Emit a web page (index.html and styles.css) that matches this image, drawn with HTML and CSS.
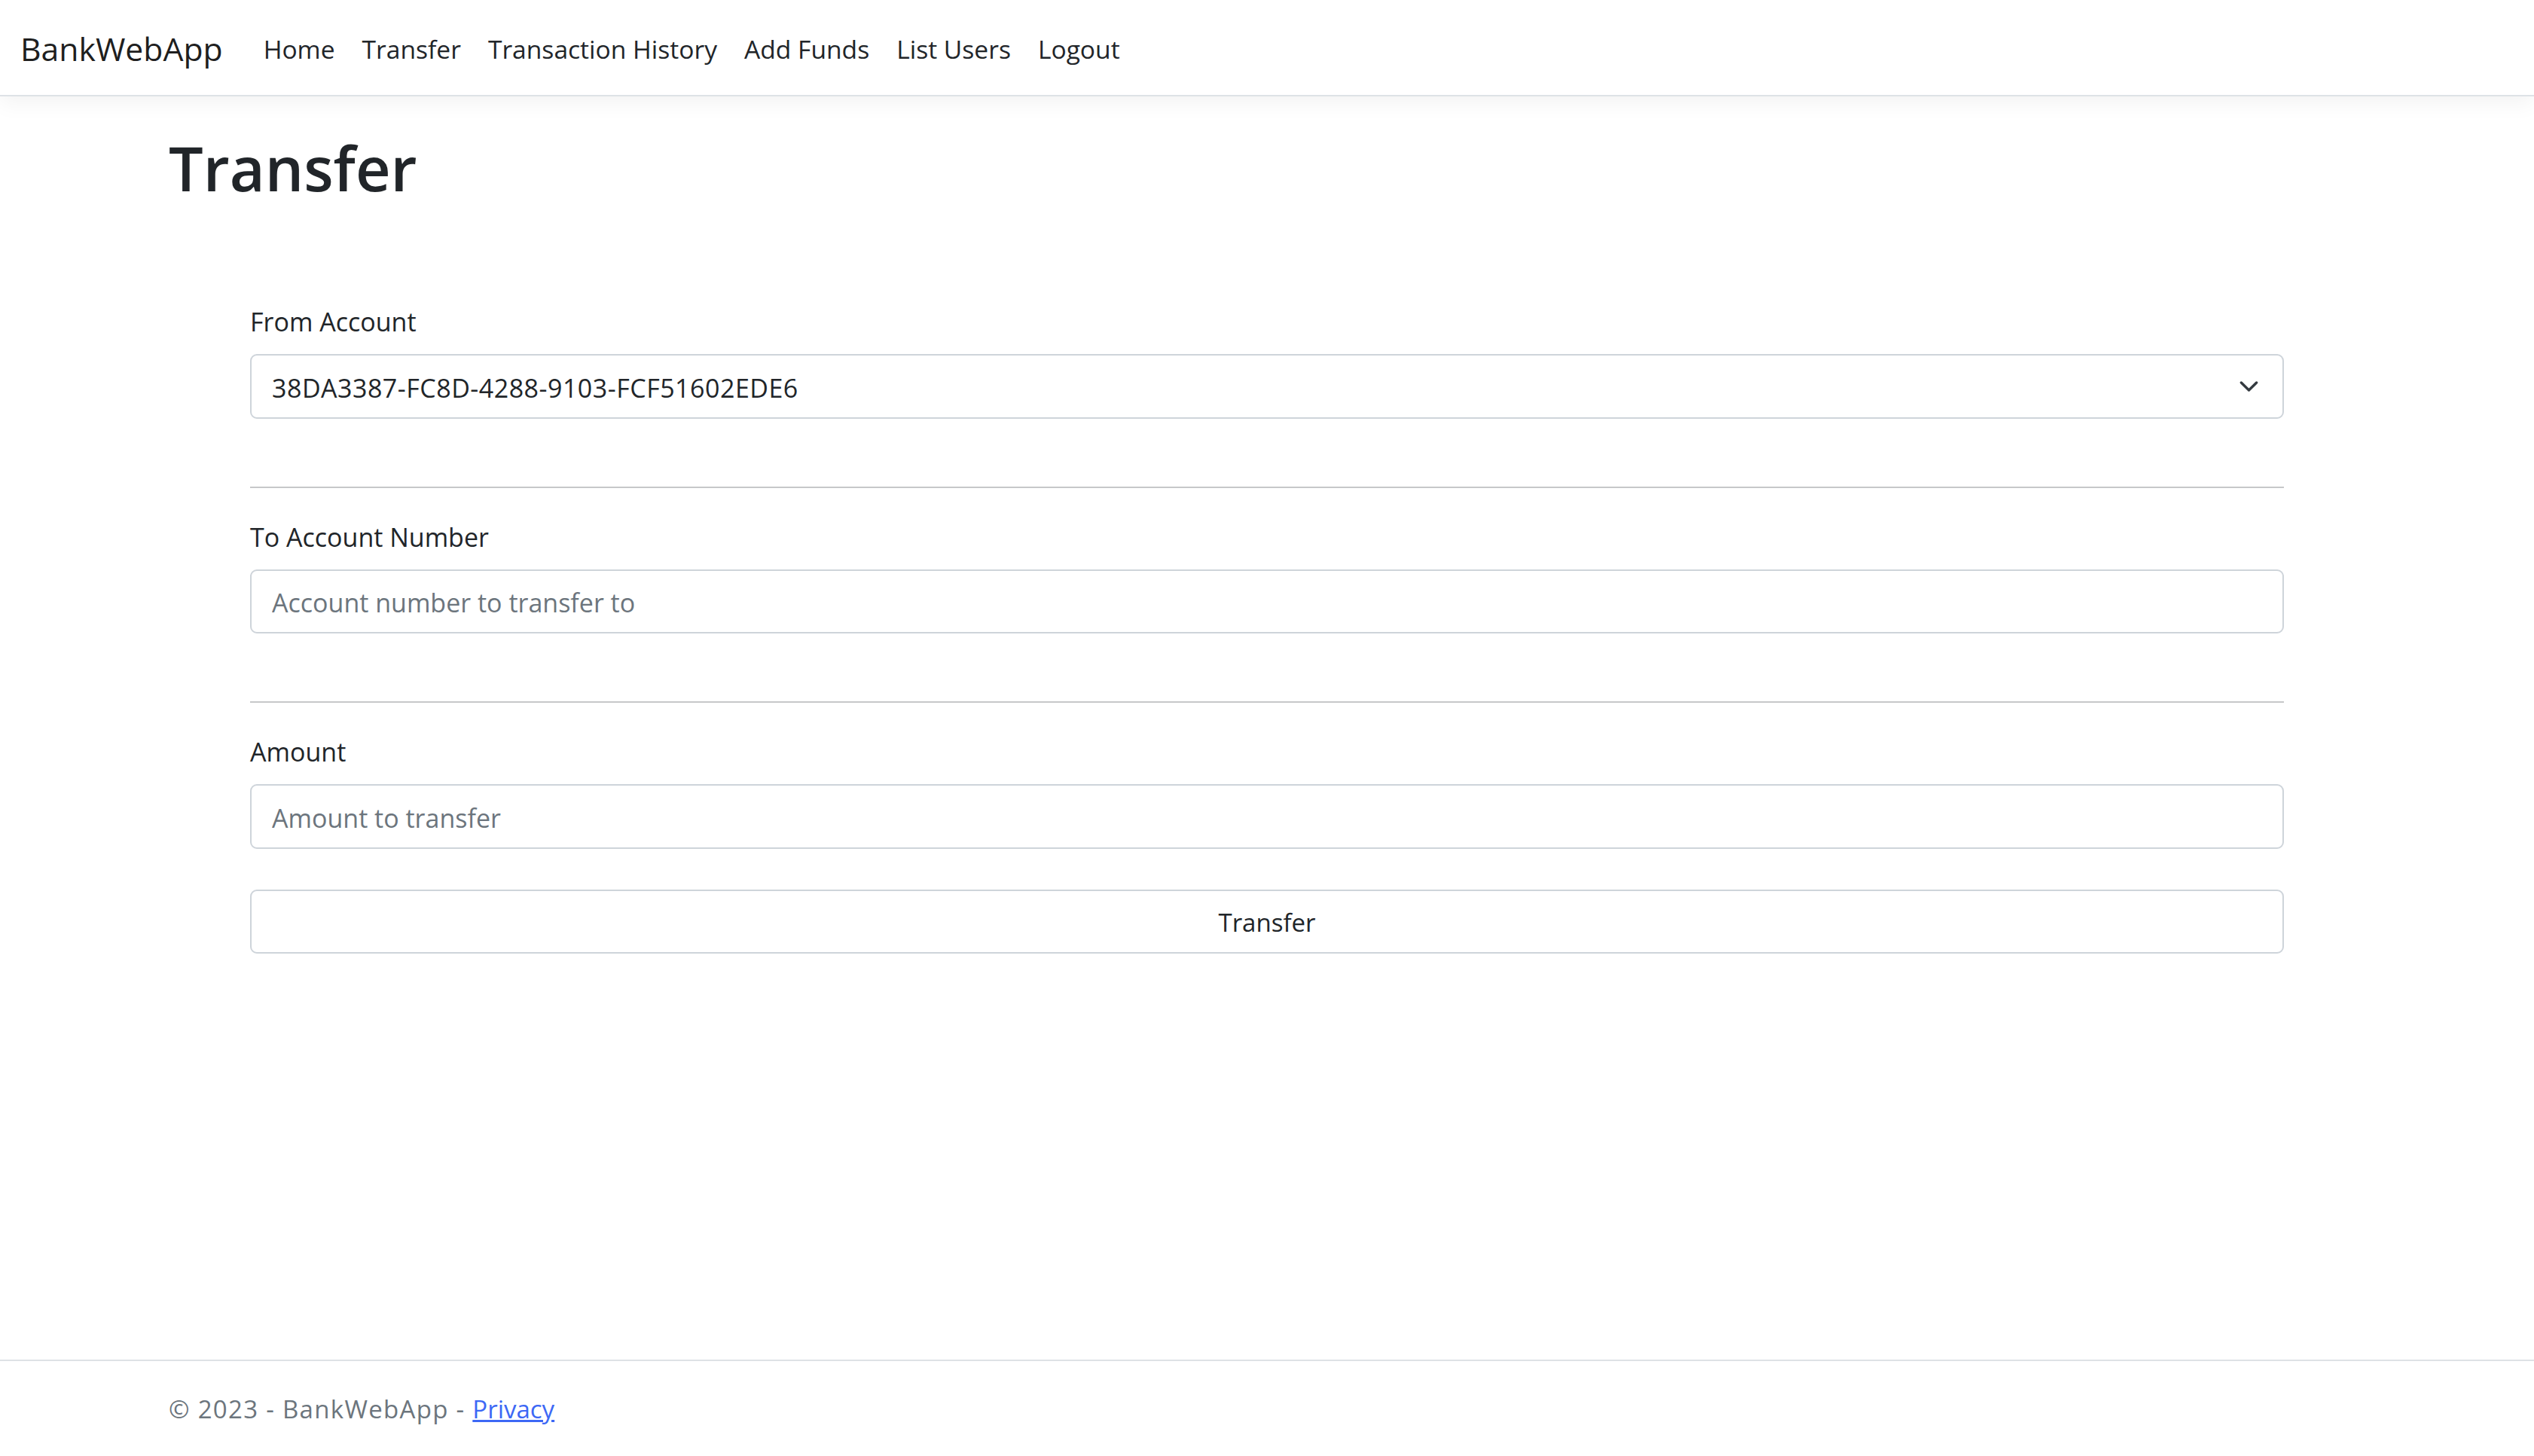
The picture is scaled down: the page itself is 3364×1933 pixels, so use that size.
FILE: index.html
```html
<!DOCTYPE html>
<html lang="en">
<head>
<meta charset="utf-8">
<title>Transfer - BankWebApp</title>
<link rel="stylesheet" href="styles.css">
</head>
<body>
<header>
  <nav class="navbar">
    <a class="navbar-brand" href="#">BankWebApp</a>
    <ul class="navbar-nav">
      <li><a class="nav-link" href="#">Home</a></li>
      <li><a class="nav-link" href="#">Transfer</a></li>
      <li><a class="nav-link" href="#">Transaction History</a></li>
      <li><a class="nav-link" href="#">Add Funds</a></li>
      <li><a class="nav-link" href="#">List Users</a></li>
      <li><a class="nav-link" href="#">Logout</a></li>
    </ul>
  </nav>
</header>
<div class="container main">
  <main>
    <h1 class="page-title">Transfer</h1>
    <form class="transfer-form">
      <div class="field">
        <label class="form-label" for="from">From Account</label>
        <div class="select-wrap">
          <select id="from" class="form-control form-select">
            <option>38DA3387-FC8D-4288-9103-FCF51602EDE6</option>
          </select>
          <svg class="select-chevron" viewBox="0 0 16 16" width="27" height="27" aria-hidden="true"><path fill="none" stroke="#343a40" stroke-linecap="round" stroke-linejoin="round" stroke-width="2" d="m2 5 6 6 6-6"/></svg>
        </div>
      </div>
      <hr class="divider">
      <div class="field">
        <label class="form-label" for="to">To Account Number</label>
        <input id="to" class="form-control" type="text" placeholder="Account number to transfer to">
      </div>
      <hr class="divider">
      <div class="field">
        <label class="form-label" for="amount">Amount</label>
        <input id="amount" class="form-control" type="text" placeholder="Amount to transfer">
      </div>
      <button type="button" class="btn-submit">Transfer</button>
    </form>
  </main>
</div>
<footer class="footer">
  <div class="container"><span class="footer-copy">&copy; 2023 - BankWebApp - </span><a href="#" class="footer-link">Privacy</a></div>
</footer>
</body>
</html>
```
FILE: styles.css
```css
html, body {
  margin: 0;
  padding: 0;
}

body {
  min-height: 100vh;
  display: flex;
  flex-direction: column;
  font-family: "Open Sans", "Noto Sans", "Liberation Sans", sans-serif;
  font-size: 33px;
  line-height: 54px;
  color: #212529;
  background: #fff;
}

a {
  text-decoration: none;
}

/* Navbar */
.navbar {
  display: flex;
  align-items: center;
  height: 126px;
  box-sizing: content-box;
  padding: 0 27px;
  background: #fff;
  border-bottom: 2px solid #dee2e6;
  box-shadow: 0 9px 27px rgba(0, 0, 0, 0.05);
}

.navbar-brand {
  font-size: 42.7px;
  line-height: 67.5px;
  padding: 13.25px 0 9.25px;
  margin-right: 36px;
  color: rgba(0, 0, 0, 0.9);
}

.navbar-nav {
  display: flex;
  list-style: none;
  margin: 0;
  padding: 0;
}

.nav-link {
  display: block;
  padding: 20px 18px 16px;
  font-size: 33.6px;
  line-height: 54px;
  color: #212529;
}

/* Container */
.container {
  max-width: 2970px;
  width: 100%;
  box-sizing: border-box;
  margin: 0 auto;
  padding: 0 27px;
}

.main {
  margin-top: 36px;
  padding-bottom: 36px;
}

.page-title {
  margin: 0 0 13px;
  padding-top: 5px;
  font-size: 81px;
  font-weight: 600;
  line-height: 108px;
}

/* Form */
.transfer-form {
  display: flex;
  flex-direction: column;
  padding: 108px 108px 0;
}

.field {
  margin-bottom: 54px;
}

.form-label {
  display: block;
  margin-bottom: 16px;
  padding-top: 2px;
  font-size: 34px;
  line-height: 54px;
}

.form-control {
  display: block;
  width: 100%;
  box-sizing: border-box;
  height: 85.5px;
  padding: 15.5px 27px 11.5px;
  font-family: inherit;
  font-size: 34px;
  line-height: 54px;
  color: #212529;
  background: #fff;
  border: 2px solid #ced4da;
  border-radius: 9px;
  outline: none;
}

.form-control::placeholder {
  color: #6c757d;
  opacity: 1;
}

.select-wrap {
  position: relative;
}

.form-select {
  appearance: none;
  -webkit-appearance: none;
  padding-right: 81px;
  letter-spacing: 0.5px;
}

.select-chevron {
  position: absolute;
  right: 33.5px;
  top: 50%;
  transform: translateY(-50%);
  pointer-events: none;
}

.divider {
  margin: 36px 0;
  height: 2px;
  border: 0;
  background: #212529;
  opacity: 0.25;
}

.btn-submit {
  display: block;
  width: 100%;
  height: 85.5px;
  padding: 15.5px 27px 11.5px;
  font-family: inherit;
  font-size: 33px;
  line-height: 54px;
  color: #212529;
  background: transparent;
  border: 2px solid #ced4da;
  border-radius: 9px;
  text-align: center;
}

/* Footer */
.footer {
  margin-top: auto;
  border-top: 2px solid #dee2e6;
  padding-top: 2px;
  line-height: 124px;
  color: #6c757d;
  white-space: nowrap;
}

.footer-copy {
  letter-spacing: 1.3px;
}

.footer-link {
  color: #3d68f5;
  text-decoration: underline;
}
```
